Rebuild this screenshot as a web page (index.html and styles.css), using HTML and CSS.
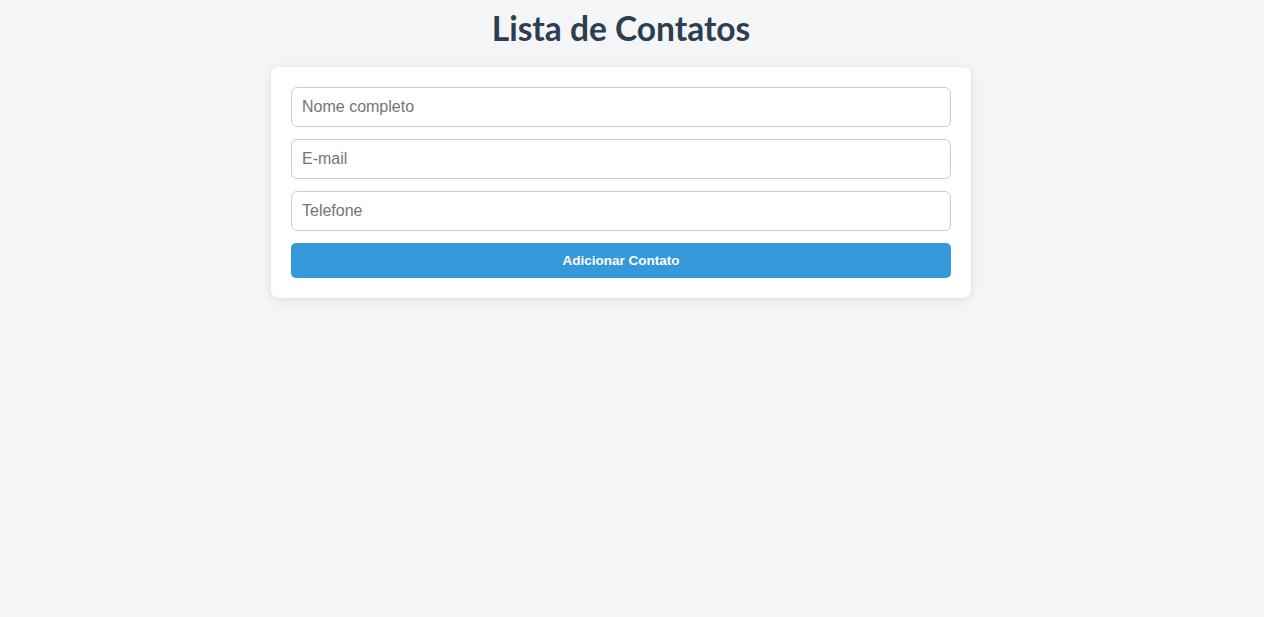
FILE: index.html
```html
<!DOCTYPE html>
<html lang="pt-BR">
<head>
<meta charset="UTF-8">
<title>Lista de Contatos</title>
<link rel="stylesheet" href="styles.css">
</head>
<body>
<h1 class="title">Lista de Contatos</h1>
<div class="card">
  <form class="form">
    <input class="field" type="text" placeholder="Nome completo">
    <input class="field" type="email" placeholder="E-mail">
    <input class="field" type="tel" placeholder="Telefone">
    <button class="btn" type="button">Adicionar Contato</button>
  </form>
</div>
</body>
</html>
```
FILE: styles.css
```css
* { box-sizing: border-box; }
html, body { margin: 0; }
body {
  background: #f4f5f7;
  font-family: "Liberation Sans", Arial, sans-serif;
  padding: 8px 42px 20px 20px;
}
.title {
  margin: 0 0 19px;
  text-align: center;
  font-family: Lato, "Open Sans", sans-serif;
  font-weight: 700;
  font-size: 33.5px;
  line-height: 40px;
  color: #2c3e50;
}
.card {
  width: 700px;
  margin: 0 auto;
  background: #fff;
  border-radius: 8px;
  box-shadow: 0 2px 10px rgba(0,0,0,0.1);
  padding: 20px;
}
.form {
  display: flex;
  flex-direction: column;
  gap: 12px;
}
.field {
  height: 40px;
  border: 1px solid #ccc;
  border-radius: 6px;
  padding: 0 10px;
  font-family: "Liberation Sans", Arial, sans-serif;
  font-size: 16px;
  color: #333;
  outline: none;
}
.field::placeholder { color: #757575; }
.btn {
  height: 35px;
  border: 0;
  border-radius: 5px;
  background: #3498db;
  color: #fff;
  font-family: "Liberation Sans", Arial, sans-serif;
  font-weight: 700;
  font-size: 13.5px;
  cursor: pointer;
}
```
